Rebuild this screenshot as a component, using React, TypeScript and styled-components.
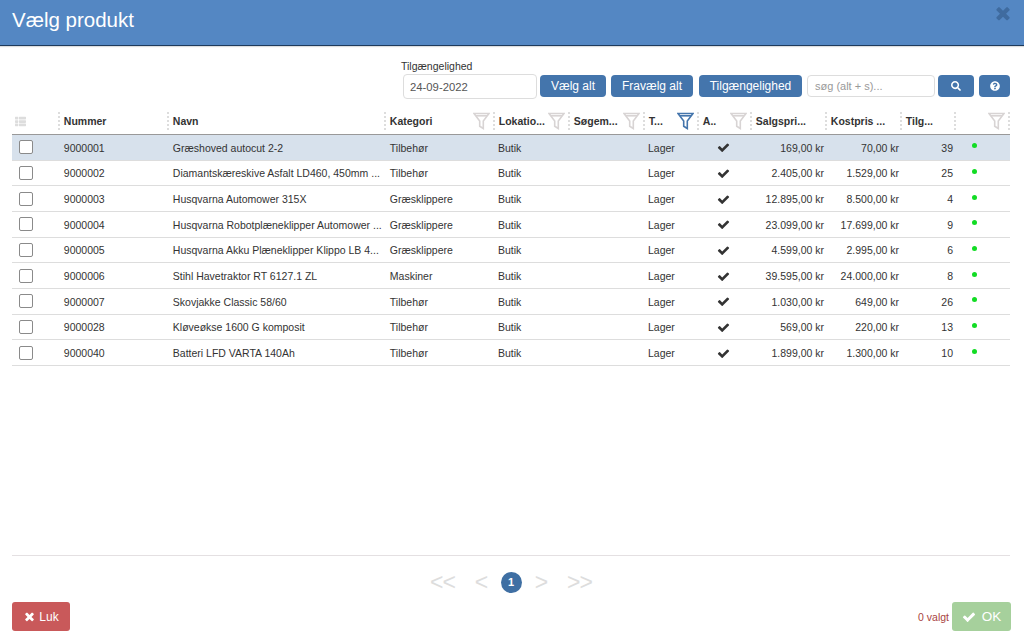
import React from "react";
import styled, { createGlobalStyle } from "styled-components";
import { FaSearch, FaQuestionCircle, FaThList } from "react-icons/fa";

const Global = createGlobalStyle`
  html, body { margin: 0; padding: 0; background: #fff; }
  body { font-family: "Liberation Sans", Arial, sans-serif; color: #333; }
`;

const COLUMNS = "47px 109px 217px 109px 75px 75px 54px 53px 75px 75px 54px 54px";

const Page = styled.div`
  width: 1024px;
  height: 639px;
  display: flex;
  flex-direction: column;
  overflow: hidden;
`;
const Header = styled.header`
  height: 45px;
  flex: none;
  background: #5487c3;
  border-bottom: 1px solid #1d3a5c;
  box-shadow: 0 1px 1px #ddd;
  padding: 0 11px 0 12px;
  display: flex;
  justify-content: space-between;
  align-items: flex-start;
`;
const Title = styled.h1`
  margin: 7px 0 0;
  font-size: 20.5px;
  line-height: 25px;
  font-weight: 400;
  color: #fff;
`;
const CloseMark = styled.span`
  margin-top: 3px;
  color: #3f6b9f;
  display: flex;
`;
const Toolbar = styled.div`
  margin-top: 14px;
  height: 39px;
  padding-right: 14px;
  display: flex;
  justify-content: flex-end;
  align-items: flex-end;
  gap: 5px;
`;
const DateField = styled.div`
  display: flex;
  flex-direction: column;
  margin-right: -2px;
`;
const FieldLabel = styled.label`
  font-size: 10.5px;
  line-height: 14px;
  padding-bottom: 1px;
  color: #333;
  margin-left: -2px;
`;
const TextBox = styled.div<{ $w: number; $h: number; $muted?: boolean }>`
  box-sizing: border-box;
  width: ${(p) => p.$w}px;
  height: ${(p) => p.$h}px;
  border: 1px solid #ddd;
  border-radius: 4px;
  background: #fff;
  padding-left: ${(p) => (p.$muted ? 7 : 6)}px;
  display: flex;
  align-items: center;
  font-size: ${(p) => (p.$muted ? 11 : 11.3)}px;
  color: ${(p) => (p.$muted ? "#999" : "#555")};
`;
const ToolButton = styled.button<{ $w: number; $extra?: number }>`
  box-sizing: border-box;
  width: ${(p) => p.$w}px;
  height: 22px;
  margin-bottom: 2px;
  margin-right: ${(p) => p.$extra ?? 0}px;
  border: 0;
  border-radius: 4px;
  background: #4475ac;
  color: #fff;
  font: 12px "Liberation Sans", Arial, sans-serif;
  padding: 0;
  display: flex;
  align-items: center;
  justify-content: center;
`;
const SearchBox = styled(TextBox)`
  margin-bottom: 2px;
  margin-right: -2px;
`;
const Table = styled.div`
  margin: 13px 14px 0 12px;
`;
const HeadRow = styled.div`
  display: grid;
  grid-template-columns: ${COLUMNS};
  height: 23px;
  box-sizing: border-box;
  border-bottom: 1px solid #999;
  align-items: start;
`;
const HeadCell = styled.div`
  height: 18px;
  min-width: 0;
  margin-right: -1px;
  box-sizing: border-box;
  border-right: 2px dotted #ddd;
  padding-left: 4.8px;
  display: flex;
  align-items: center;
  justify-content: space-between;
  font-size: 10.5px;
  font-weight: 700;
  color: #333;
  white-space: nowrap;
`;
const HeadLead = styled(HeadCell)`
  padding-left: 3px;
  color: #ddd;
  font-size: 11px;
`;
const Funnel = styled.svg<{ $active?: boolean }>`
  width: 17px;
  height: 18px;
  flex: none;
  margin-right: 3px;
  fill: none;
  stroke: ${(p) => (p.$active ? "#4475ac" : "#d8d4d4")};
  stroke-width: 1.6;
`;
const Row = styled.div<{ $selected?: boolean }>`
  display: grid;
  grid-template-columns: ${COLUMNS};
  height: 25.67px;
  box-sizing: border-box;
  border-bottom: 1px solid #ddd;
  align-items: center;
  background: ${(p) => (p.$selected ? "#d7e1ec" : "#fff")};
  font-size: 10.5px;
  color: #333;
`;
const Cell = styled.div<{ $right?: boolean }>`
  min-width: 0;
  padding: 1px ${(p) => (p.$right ? "2px" : "3px")} 0 ${(p) => (p.$right ? "0" : "4.8px")};
  text-align: ${(p) => (p.$right ? "right" : "left")};
  white-space: nowrap;
  overflow: hidden;
`;
const NarrowCell = styled(Cell)`
  padding-left: 4px;
`;
const BoxCell = styled.div`
  padding-left: 7px;
`;
const Box = styled.span`
  display: block;
  box-sizing: border-box;
  width: 14px;
  height: 14px;
  border: 1px solid #8a8a8a;
  border-radius: 2px;
  background: #fff;
`;
const CheckCell = styled.div`
  padding: 1px 3px 0 0;
  display: flex;
  justify-content: center;
  color: #333;
`;
const DotCell = styled.div`
  padding: 0 0 3px 17px;
`;
const Dot = styled.span`
  display: block;
  width: 5px;
  height: 5px;
  border-radius: 50%;
  background: #12dc24;
`;
const Spacer = styled.div`
  flex: 1;
`;
const Rule = styled.div`
  margin: 0 14px 0 12px;
  height: 1px;
  background: #e4e0e2;
`;
const Pager = styled.nav`
  height: 20px;
  margin-top: 16px;
  padding-right: 2px;
  display: flex;
  justify-content: center;
  align-items: center;
  color: #dddddd;
  font-size: 23px;
`;
const PageArrow = styled.span<{ $w: number; $gap: number }>`
  width: ${(p) => p.$w}px;
  margin-right: ${(p) => p.$gap}px;
  text-align: center;
  line-height: 20px;
  letter-spacing: -1px;
`;
const PageDot = styled.span`
  width: 21px;
  height: 21px;
  border-radius: 50%;
  background: #3f6fa3;
  color: #fff;
  font-size: 11px;
  font-weight: 700;
  display: flex;
  align-items: center;
  justify-content: center;
  margin-right: 13px;
`;
const Footer = styled.footer`
  margin: 10px 13px 8px 12px;
  height: 29px;
  display: flex;
  justify-content: space-between;
  align-items: center;
`;
const FootGroup = styled.div`
  display: flex;
  align-items: center;
  gap: 3px;
`;
const Danger = styled.button`
  width: 58px;
  height: 29px;
  border: 0;
  border-radius: 3px;
  background: #c9595a;
  color: #fff;
  font: 12px "Liberation Sans", Arial, sans-serif;
  padding: 0;
  display: flex;
  align-items: center;
  justify-content: center;
  gap: 3px;
`;
const Confirm = styled.button`
  width: 59px;
  height: 29px;
  border: 0;
  border-radius: 3px;
  background: #a6d09c;
  color: #fff;
  font: 13.5px "Liberation Sans", Arial, sans-serif;
  padding: 0;
  display: flex;
  align-items: center;
  justify-content: center;
  gap: 6px;
`;
const Count = styled.span`
  font-size: 10.5px;
  color: #a94442;
`;

const CHECK_PATH =
  "M1671 566q0 40-28 68l-724 724-136 136q-28 28-68 28t-68-28l-136-136-362-362q-28-28-28-68t28-68l136-136q28-28 68-28t68 28l294 295 656-657q28-28 68-28t68 28l136 136q28 28 28 68z";
const TIMES_PATH =
  "M1490 1322q0 40-28 68l-136 136q-28 28-68 28t-68-28l-294-294-294 294q-28 28-68 28t-68-28l-136-136q-28-28-28-68t28-68l294-294-294-294q-28-28-28-68t28-68l136-136q28-28 68-28t68 28l294 294 294-294q28-28 68-28t68 28l136 136q28 28 28 68t-28 68l-294 294 294 294q28 28 28 68z";

const Glyph = ({ d, size }: { d: string; size: number }) => (
  <svg width={size} height={size} viewBox="0 0 1792 1792" fill="currentColor">
    <path d={d} />
  </svg>
);

const FunnelIcon = ({ active }: { active?: boolean }) => (
  <Funnel viewBox="0 0 17 18" $active={active}>
    <path d="M1 1.5h15L10.3 9v7.5l-3.6-2.3V9z" />
    <path d="M3 3.8h11" />
  </Funnel>
);

type Product = { nr: string; name: string; cat: string; sale: string; cost: string; stock: number };

const products: Product[] = [
  { nr: "9000001", name: "Græshoved autocut 2-2", cat: "Tilbehør", sale: "169,00 kr", cost: "70,00 kr", stock: 39 },
  { nr: "9000002", name: "Diamantskæreskive Asfalt LD460, 450mm ...", cat: "Tilbehør", sale: "2.405,00 kr", cost: "1.529,00 kr", stock: 25 },
  { nr: "9000003", name: "Husqvarna Automower 315X", cat: "Græsklippere", sale: "12.895,00 kr", cost: "8.500,00 kr", stock: 4 },
  { nr: "9000004", name: "Husqvarna Robotplæneklipper Automower ...", cat: "Græsklippere", sale: "23.099,00 kr", cost: "17.699,00 kr", stock: 9 },
  { nr: "9000005", name: "Husqvarna Akku Plæneklipper Klippo LB 4...", cat: "Græsklippere", sale: "4.599,00 kr", cost: "2.995,00 kr", stock: 6 },
  { nr: "9000006", name: "Stihl Havetraktor RT 6127.1 ZL", cat: "Maskiner", sale: "39.595,00 kr", cost: "24.000,00 kr", stock: 8 },
  { nr: "9000007", name: "Skovjakke Classic 58/60", cat: "Tilbehør", sale: "1.030,00 kr", cost: "649,00 kr", stock: 26 },
  { nr: "9000028", name: "Kløveøkse 1600 G komposit", cat: "Tilbehør", sale: "569,00 kr", cost: "220,00 kr", stock: 13 },
  { nr: "9000040", name: "Batteri LFD VARTA 140Ah", cat: "Tilbehør", sale: "1.899,00 kr", cost: "1.300,00 kr", stock: 10 },
];

const heads: { label: string; filter?: boolean; active?: boolean }[] = [
  { label: "Nummer" },
  { label: "Navn" },
  { label: "Kategori", filter: true },
  { label: "Lokatio...", filter: true },
  { label: "Søgem...", filter: true },
  { label: "T...", filter: true, active: true },
  { label: "A..", filter: true },
  { label: "Salgspri..." },
  { label: "Kostpris ..." },
  { label: "Tilg..." },
  { label: "", filter: true },
];

export default function App() {
  return (
    <Page>
      <Global />
      <Header>
        <Title>Vælg produkt</Title>
        <CloseMark><Glyph d={TIMES_PATH} size={20} /></CloseMark>
      </Header>
      <Toolbar>
        <DateField>
          <FieldLabel>Tilgængelighed</FieldLabel>
          <TextBox $w={134} $h={25}>24-09-2022</TextBox>
        </DateField>
        <ToolButton $w={66}>Vælg alt</ToolButton>
        <ToolButton $w={82} $extra={1}>Fravælg alt</ToolButton>
        <ToolButton $w={103}>Tilgængelighed</ToolButton>
        <SearchBox $w={128} $h={22} $muted>søg (alt + s)...</SearchBox>
        <ToolButton $w={36}><FaSearch size={10} /></ToolButton>
        <ToolButton $w={31}><FaQuestionCircle size={10} /></ToolButton>
      </Toolbar>
      <Table>
        <HeadRow>
          <HeadLead><FaThList /></HeadLead>
          {heads.map((h, i) => (
            <HeadCell key={i}>
              <span>{h.label}</span>
              {h.filter && <FunnelIcon active={h.active} />}
            </HeadCell>
          ))}
        </HeadRow>
        {products.map((p, i) => (
          <Row key={p.nr} $selected={i === 0}>
            <BoxCell><Box /></BoxCell>
            <Cell>{p.nr}</Cell>
            <Cell>{p.name}</Cell>
            <Cell>{p.cat}</Cell>
            <NarrowCell>Butik</NarrowCell>
            <Cell />
            <NarrowCell>Lager</NarrowCell>
            <CheckCell><Glyph d={CHECK_PATH} size={13} /></CheckCell>
            <Cell $right>{p.sale}</Cell>
            <Cell $right>{p.cost}</Cell>
            <Cell $right>{p.stock}</Cell>
            <DotCell><Dot /></DotCell>
          </Row>
        ))}
      </Table>
      <Spacer />
      <Rule />
      <Pager>
        <PageArrow $w={26} $gap={19}>&lt;&lt;</PageArrow>
        <PageArrow $w={13} $gap={13}>&lt;</PageArrow>
        <PageDot>1</PageDot>
        <PageArrow $w={13} $gap={19}>&gt;</PageArrow>
        <PageArrow $w={26} $gap={0}>&gt;&gt;</PageArrow>
      </Pager>
      <Footer>
        <Danger><Glyph d={TIMES_PATH} size={13} />Luk</Danger>
        <FootGroup>
          <Count>0 valgt</Count>
          <Confirm><Glyph d={CHECK_PATH} size={14} />OK</Confirm>
        </FootGroup>
      </Footer>
    </Page>
  );
}
